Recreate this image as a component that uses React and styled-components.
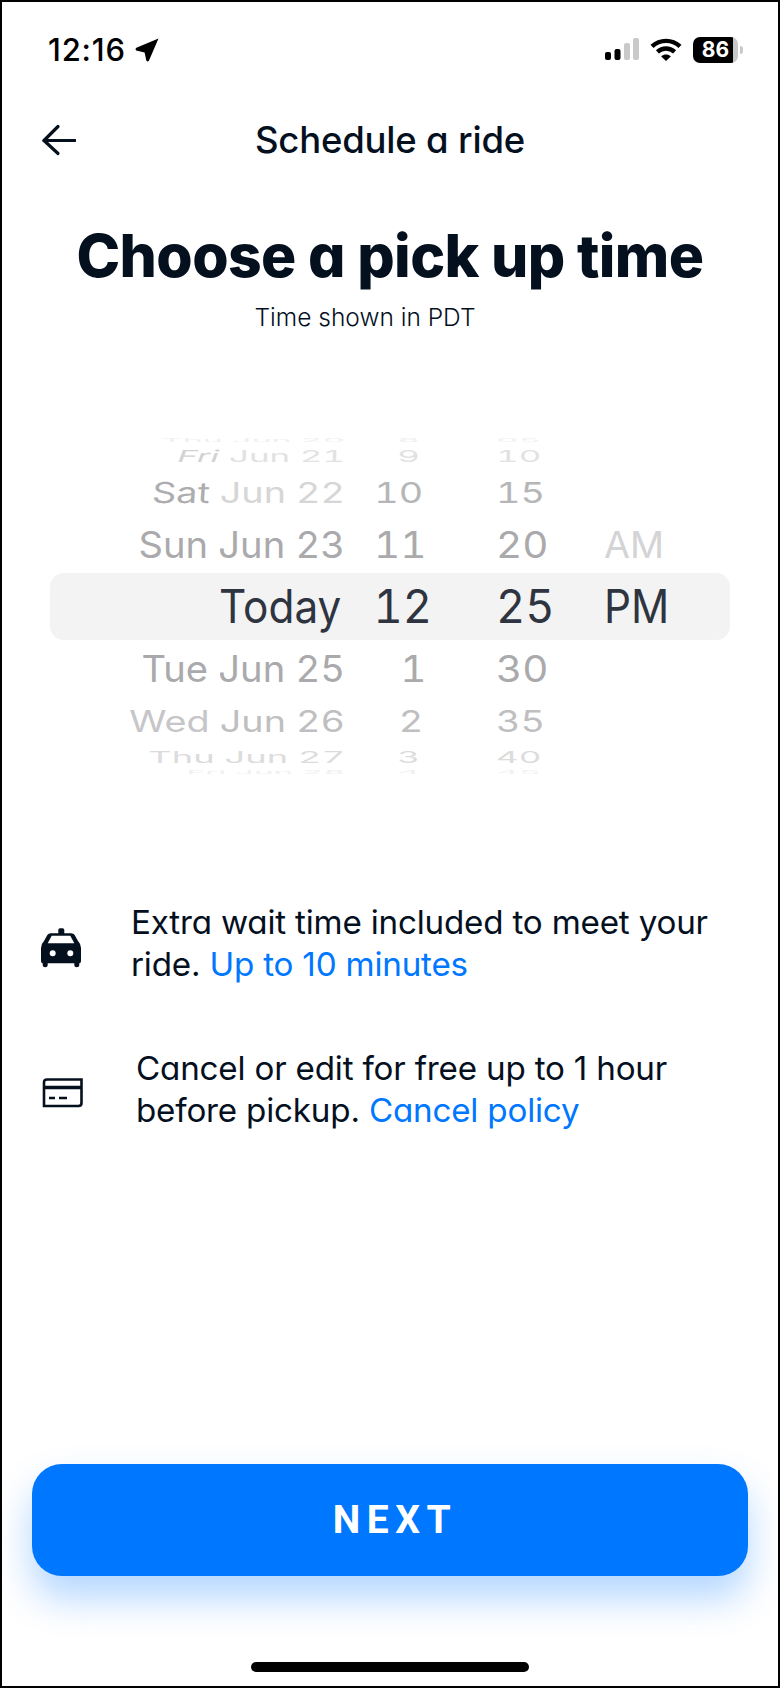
import React from "react";
import styled, { createGlobalStyle } from "styled-components";

const GlobalStyle = createGlobalStyle`
  html, body { margin: 0; padding: 0; background: #fff; }
  * { box-sizing: border-box; }
`;

const INK = "#05101f";
const BLUE = "#0077ff";

const Screen = styled.div`
  width: 780px;
  height: 1688px;
  border: 2px solid #000;
  background: #fff;
  display: flex;
  flex-direction: column;
  font-family: Inter, "Liberation Sans", sans-serif;
  font-feature-settings: "cv11" 1;
  color: ${INK};
  overflow: hidden;
`;

const StatusBar = styled.div`
  height: 74px;
  padding: 30px 40px 8px 46px;
  display: flex;
  align-items: center;
  justify-content: space-between;
  color: #000;
`;

const Clock = styled.div`
  display: flex;
  align-items: center;
  gap: 9px;
  font-size: 31px;
  line-height: 36px;
  font-weight: 500;
  letter-spacing: 0.8px;
  font-feature-settings: normal;
`;

const StatusIcons = styled.div`
  display: flex;
  align-items: center;
  gap: 11px;
`;

const Battery = styled.div`
  position: relative;
  width: 45px;
  height: 26px;
  border-radius: 7px;
  background: linear-gradient(90deg, #000 0 89%, #c8c8c8 89% 100%);
  color: #fff;
  font-size: 21px;
  font-weight: 700;
  line-height: 26px;
  text-align: center;
  font-feature-settings: normal;
  &::after {
    content: "";
    position: absolute;
    right: -5px;
    top: 9px;
    width: 3px;
    height: 8px;
    border-radius: 0 3px 3px 0;
    background: #c8c8c8;
  }
`;

const NavBar = styled.div`
  height: 64px;
  margin-top: 32px;
  position: relative;
  display: flex;
  align-items: center;
  justify-content: center;
`;

const BackButton = styled.button`
  position: absolute;
  left: 38px;
  top: 16px;
  width: 36px;
  height: 32px;
  padding: 0;
  border: 0;
  background: none;
  display: flex;
`;

const NavTitle = styled.h2`
  margin: 0;
  font-size: 36.5px;
  line-height: 44px;
  font-weight: 500;
  letter-spacing: -0.2px;
`;

const Heading = styled.h1`
  margin: 51px 0 0;
  text-align: center;
  font-size: 58.8px;
  line-height: 66px;
  font-weight: 800;
  letter-spacing: -0.6px;
`;

const Subtitle = styled.p`
  margin: 12px 50px 0 0;
  text-align: center;
  font-size: 24.5px;
  line-height: 32px;
  font-weight: 300;
`;

const Picker = styled.div`
  position: relative;
  margin: 100px 48px 0;
  height: 346px;
  display: flex;
  flex-direction: column;
  font-feature-settings: "tnum" 1;
`;

const Band = styled.div`
  position: absolute;
  left: 0;
  right: 0;
  top: 140px;
  height: 67px;
  border-radius: 14px;
  background: #f3f3f3;
`;

const WheelRow = styled.div`
  position: relative;
  height: ${(p) => p.$h}px;
  flex: none;
  display: grid;
  grid-template-columns: 295px 34px 54px 63px 56px 52px 1fr;
  grid-template-rows: ${(p) => p.$h}px;
  align-items: center;
  font-size: 46px;
  font-weight: 400;
`;

const Cell = styled.div`
  grid-column: ${(p) => p.$col};
  display: flex;
  white-space: nowrap;
  line-height: 1;
  color: ${(p) => p.$color};
  justify-content: ${(p) => (p.$origin === "right" || p.$col === 3 ? "flex-end" : "flex-start")};
  transform-origin: ${(p) => p.$origin} center;
  transform: scale(${(p) => p.$sx}, ${(p) => p.$sy});
  padding-right: ${(p) => p.$inset || 0}px;
`;

const Weekday = styled.span`
  display: inline-block;
  color: ${(p) => p.$color};
  white-space: pre;
  transform: skewX(${(p) => p.$slant || 0}deg);
`;

const Info = styled.div`
  margin-top: 122px;
  display: flex;
  flex-direction: column;
  gap: 62px;
`;

const InfoRow = styled.div`
  display: flex;
  align-items: center;
  padding-left: ${(p) => p.$iconLeft}px;
`;

const InfoIcon = styled.div`
  flex: none;
  width: ${(p) => p.$slot}px;
  margin-top: ${(p) => p.$drop}px;
  display: flex;
`;

const InfoText = styled.p`
  margin: 0;
  font-size: 33.2px;
  line-height: 42px;
  font-weight: 400;
  letter-spacing: -0.2px;
`;

const InfoLink = styled.a`
  color: ${BLUE};
`;

const Footer = styled.div`
  margin-top: auto;
  padding: 0 30px;
  display: flex;
  flex-direction: column;
  align-items: center;
`;

const NextButton = styled.button`
  width: 100%;
  height: 112px;
  border: 0;
  border-radius: 30px;
  background: ${BLUE};
  color: #fff;
  font-family: Roboto, sans-serif;
  font-size: 39px;
  font-weight: 700;
  letter-spacing: 6.5px;
  padding: 0 0 0 10px;
  box-shadow: 0 22px 38px rgba(0, 119, 255, 0.3);
`;

const HomeIndicator = styled.div`
  width: 278px;
  height: 10px;
  border-radius: 5px;
  background: #000;
  margin: 86px 0 14px;
`;

const LocationArrow = () => (
  <svg width="24" height="24" viewBox="0 0 24 24">
    <path d="M23.5 0.6 L14 22.6 Q12.7 24.4 11.3 22.4 L9.6 14.6 L1.2 12.4 Q-0.2 11 1.4 9.8 Z" fill="#000" />
  </svg>
);

const SignalBars = () => (
  <svg width="34" height="24" viewBox="0 0 34 24">
    <rect x="0" y="14" width="6" height="8" rx="2" fill="#000" />
    <rect x="9.500" y="11" width="6" height="11" rx="2" fill="#000" />
    <rect x="19" y="5" width="6" height="17" rx="2" fill="#c9c9c9" />
    <rect x="28" y="0" width="6" height="22" rx="2" fill="#c9c9c9" />
  </svg>
);

const Wifi = () => (
  <svg width="32" height="24" viewBox="0 0 32 24" fill="none" stroke="#000" strokeWidth="4.4">
    <path d="M2 8.400 C10 1 22 1 30 8.400" />
    <path d="M7.400 13.800 C12.400 9.400 19.600 9.400 24.600 13.800" />
    <path d="M16 23 L11.200 18.400 C14 16 18 16 20.800 18.400 Z" fill="#000" stroke="none" />
  </svg>
);

const BackArrow = () => (
  <svg width="36" height="32" viewBox="0 0 36 32" fill="none" stroke={INK} strokeWidth="3.2" strokeLinecap="round" strokeLinejoin="round">
    <path d="M18 2.500 L4 16.500 L18 29.500" />
    <path d="M4 16.500 H35" />
  </svg>
);

const TaxiIcon = () => (
  <svg width="42" height="42" viewBox="0 0 42 42">
    <path
      fill={INK}
      fillRule="evenodd"
      d="M18.300 3 Q18.300 1.300 20 1.300 H22.500 Q24.300 1.300 24.300 3 V6.300 H31 Q34 6.300 35.500 9.500 L38 14 Q41 17 41 21 V34 Q41 36.300 39.300 36.300 V38.300 Q39.300 40.300 36.800 40.300 Q34.300 40.300 34.300 38.300 V36.300 H7.700 V38.300 Q7.700 40.300 5.200 40.300 Q2.700 40.300 2.700 38.300 V36.300 Q1 36.300 1 34 V21 Q1 17 4 14 L6.500 9.500 Q8 6.300 11 6.300 H18.300 Z M11.700 8.700 L7.700 16.300 H34.300 L30.300 8.700 Z M12.700 23.300 A3 3 0 1 0 12.700 29.300 A3 3 0 1 0 12.700 23.300 Z M30.300 23.300 A3 3 0 1 0 30.300 29.300 A3 3 0 1 0 30.300 23.300 Z"
    />
  </svg>
);

const CardIcon = () => (
  <svg width="42" height="30" viewBox="0 0 42 30" fill="none" stroke={INK}>
    <path d="M5 1.500 H39.500 V25 Q39.500 28 36.500 28 H2 V4.500 Q2 1.500 5 1.500 Z" strokeWidth="2.600" />
    <path d="M2 9.500 H39.500" strokeWidth="3.600" />
    <path d="M7 20 H13 M17 20 H25" strokeWidth="2.600" />
  </svg>
);

// Wheel rows run top to bottom; each carries the squash and fade of its place on the drum.
const wheel = [
  { h: 14, sy: 0.1, dateSx: 0.74, numSx: 0.76, color: "#f0f0f0", dayColor: "#f0f0f0", day: "Thu", rest: " Jun 20", hour: "8", minute: "05" },
  { h: 18, sy: 0.36, dateSx: 0.76, numSx: 0.76, color: "#e2e2e2", dayColor: "#d2d2d2", slant: -10, day: "Fri", rest: " Jun 21", hour: "9", minute: "10" },
  { h: 54, sy: 0.63, dateSx: 0.82, numSx: 0.82, color: "#b6b6b8", dateColor: "#d6d6d6", dayColor: "#adadaf", slant: -3, day: "Sat", rest: " Jun 22", hour: "10", minute: "15" },
  { h: 50, sy: 0.8, dateSx: 0.83, numSx: 0.88, color: "#aaaaad", dayColor: "#aaaaad", day: "Sun", rest: " Jun 23", hour: "11", minute: "20", period: "AM", periodColor: "#d4d4d6", periodSx: 0.82 },
  { h: 74, sy: 1, dateSx: 0.92, numSx: 0.98, color: "#2e3440", dayColor: "#2e3440", day: "Today", rest: "", inset: 4, hour: "12", minute: "25", period: "PM", periodColor: "#2e3440", periodSx: 0.92 },
  { h: 50, sy: 0.8, dateSx: 0.83, numSx: 0.88, color: "#aaaaad", dayColor: "#aaaaad", day: "Tue", rest: " Jun 25", hour: "1", minute: "30" },
  { h: 56, sy: 0.64, dateSx: 0.82, numSx: 0.82, color: "#bfbfc1", dayColor: "#c6c6c8", day: "Wed", rest: " Jun 26", hour: "2", minute: "35" },
  { h: 16, sy: 0.36, dateSx: 0.79, numSx: 0.76, color: "#dcdcdc", dayColor: "#dcdcdc", day: "Thu", rest: " Jun 27", hour: "3", minute: "40" },
  { h: 14, sy: 0.1, dateSx: 0.72, numSx: 0.76, color: "#f0f0f0", dayColor: "#f0f0f0", day: "Fri", rest: " Jun 28", hour: "4", minute: "45" },
];

const TimeWheel = () => (
  <Picker>
    <Band />
    {wheel.map((r) => (
      <WheelRow key={r.day + r.rest} $h={r.h}>
        <Cell $col={1} $origin="right" $sx={r.dateSx} $sy={r.sy} $inset={r.inset} $color={r.dateColor || r.color}>
          <Weekday $color={r.dayColor} $slant={r.slant}>{r.day}</Weekday>
          <Weekday $color={r.dateColor || r.color}>{r.rest}</Weekday>
        </Cell>
        <Cell $col={3} $origin="left" $sx={r.numSx} $sy={r.sy} $color={r.color}>{r.hour}</Cell>
        <Cell $col={5} $origin="left" $sx={r.numSx} $sy={r.sy} $color={r.color}>{r.minute}</Cell>
        {r.period && (
          <Cell $col={7} $origin="left" $sx={r.periodSx} $sy={r.sy} $color={r.periodColor}>{r.period}</Cell>
        )}
      </WheelRow>
    ))}
  </Picker>
);

export default function App() {
  return (
    <>
      <GlobalStyle />
      <Screen>
        <StatusBar>
          <Clock>
            12:16
            <LocationArrow />
          </Clock>
          <StatusIcons>
            <SignalBars />
            <Wifi />
            <Battery>86</Battery>
          </StatusIcons>
        </StatusBar>
        <NavBar>
          <BackButton aria-label="Back">
            <BackArrow />
          </BackButton>
          <NavTitle>Schedule a ride</NavTitle>
        </NavBar>
        <Heading>Choose a pick up time</Heading>
        <Subtitle>Time shown in PDT</Subtitle>
        <TimeWheel />
        <Info>
          <InfoRow $iconLeft={38}>
            <InfoIcon $slot={91} $drop={9}>
              <TaxiIcon />
            </InfoIcon>
            <InfoText>
              Extra wait time included to meet your
              <br />
              ride. <InfoLink>Up to 10 minutes</InfoLink>
            </InfoText>
          </InfoRow>
          <InfoRow $iconLeft={40}>
            <InfoIcon $slot={94} $drop={7}>
              <CardIcon />
            </InfoIcon>
            <InfoText>
              Cancel or edit for free up to 1 hour
              <br />
              before pickup. <InfoLink>Cancel policy</InfoLink>
            </InfoText>
          </InfoRow>
        </Info>
        <Footer>
          <NextButton>NEXT</NextButton>
          <HomeIndicator />
        </Footer>
      </Screen>
    </>
  );
}
